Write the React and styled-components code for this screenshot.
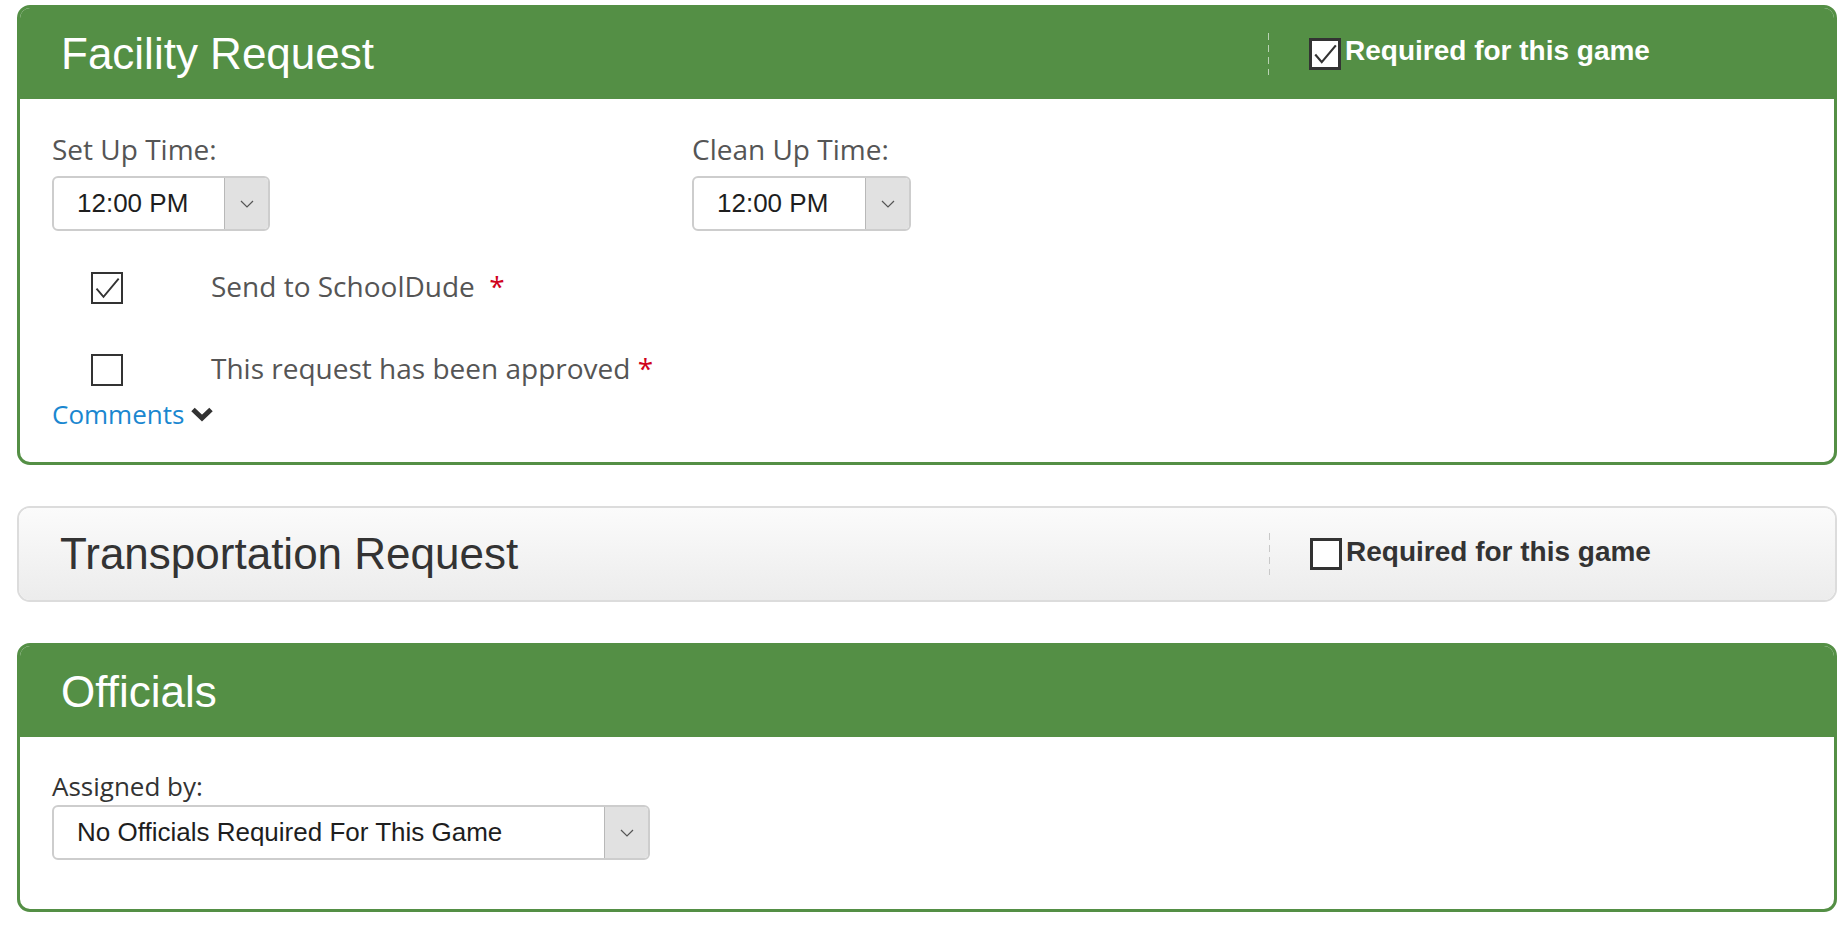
import React from "react";
import styled, { createGlobalStyle } from "styled-components";

const GREEN = "#548f45";

const GlobalStyle = createGlobalStyle`
  html, body {
    margin: 0;
    padding: 0;
    background: #fff;
  }
  body {
    font-family: "Open Sans", "Liberation Sans", sans-serif;
  }
`;

const Page = styled.div`
  padding: 5px 9px 20px 17px;
  display: flex;
  flex-direction: column;
  gap: 41px;
`;

const Card = styled.section`
  border: ${(p) => (p.$green ? `3px solid ${GREEN}` : "2px solid #dcdcdc")};
  border-radius: 13px;
  overflow: hidden;
  background: #fff;
`;

const Header = styled.header`
  height: ${(p) => (p.$green ? "91px" : "92px")};
  display: flex;
  align-items: center;
  padding-left: 41px;
  background: ${(p) =>
    p.$green ? GREEN : "linear-gradient(to bottom, #fbfbfb 0%, #ececec 100%)"};
  color: ${(p) => (p.$green ? "#fff" : "#333")};
`;

const Title = styled.h2`
  flex: 1;
  margin: 0;
  font-family: "Liberation Sans", Arial, sans-serif;
  font-weight: normal;
  font-size: 44px;
`;

const Required = styled.div`
  width: 566px;
  display: flex;
  align-items: center;
  align-self: stretch;
`;

const Divider = styled.div`
  width: 1px;
  height: 42px;
  background: repeating-linear-gradient(
    to bottom,
    ${(p) => (p.$green ? "rgba(255,255,255,0.6)" : "#c8c8c8")} 0 7px,
    transparent 7px 12px
  );
  margin-right: 40px;
`;

const RequiredLabel = styled.span`
  margin-left: 4px;
  margin-top: -5px;
  font-family: "Liberation Sans", Arial, sans-serif;
  font-weight: bold;
  font-size: 28px;
`;

const Box = styled.span`
  box-sizing: border-box;
  width: ${(p) => p.$size}px;
  height: ${(p) => p.$size}px;
  border: ${(p) => p.$bw}px solid #333;
  background: #fff;
  display: inline-flex;
  align-items: center;
  justify-content: center;
  flex-shrink: 0;
`;

const Body = styled.div`
  padding: ${(p) => p.$pad};
`;

const Columns = styled.div`
  display: grid;
  grid-template-columns: 640px 1fr;
`;

const Label = styled.div`
  font-size: ${(p) => p.$size || 28}px;
  line-height: 38px;
  color: ${(p) => p.$color || "#555"};
  margin-bottom: ${(p) => p.$gap}px;
`;

const SelectBox = styled.div`
  box-sizing: border-box;
  width: ${(p) => p.$w}px;
  height: 55px;
  display: flex;
  border: 2px solid #cdcdcd;
  border-radius: 6px;
  overflow: hidden;
  background: #fff;
`;

const SelectValue = styled.div`
  flex: 1;
  display: flex;
  align-items: center;
  padding-left: 23px;
  font-family: "Liberation Sans", Arial, sans-serif;
  font-size: 26px;
  color: #1e1e1e;
`;

const SelectButton = styled.div`
  width: 43px;
  background: #e1e1e1;
  border-left: 1px solid #b8b8b8;
  display: flex;
  align-items: center;
  justify-content: center;
`;

const CheckRows = styled.div`
  display: flex;
  flex-direction: column;
  gap: 50px;
  margin-top: 41px;
  padding-left: 39px;
`;

const CheckRow = styled.div`
  height: 32px;
  display: flex;
  align-items: center;
  gap: 88px;
`;

const CheckText = styled.span`
  font-size: 28px;
  line-height: 38px;
  color: #555;
  margin-top: -4px;
  white-space: nowrap;
`;

const Star = styled.span`
  color: #d0021b;
`;

const CommentsLink = styled.a`
  display: inline-flex;
  align-items: center;
  gap: 6px;
  margin-top: 9px;
  font-size: 26px;
  line-height: 38px;
  color: #1a87d0;
  text-decoration: none;
`;

const Check = ({ size, width }) => (
  <svg width={size} height={size} viewBox="0 0 24 24">
    <polyline
      points="3,12.5 9,19.5 22,4"
      fill="none"
      stroke="#333"
      strokeWidth={width}
    />
  </svg>
);

const Checkbox = ({ checked, size = 32, bw = 2 }) => (
  <Box $size={size} $bw={bw}>
    {checked && <Check size={size - 4} width={bw === 3 ? 2 : 1.6} />}
  </Box>
);

const Select = ({ value, width }) => (
  <SelectBox $w={width}>
    <SelectValue>{value}</SelectValue>
    <SelectButton>
      <svg width="14" height="8" viewBox="0 0 14 8">
        <polyline points="1,1 7,7 13,1" fill="none" stroke="#555" strokeWidth="1.2" />
      </svg>
    </SelectButton>
  </SelectBox>
);

const PanelHeader = ({ title, green, checked }) => (
  <Header $green={green}>
    <Title>{title}</Title>
    {checked !== undefined && (
      <Required>
        <Divider $green={green} />
        <Checkbox checked={checked} size={32} bw={3} />
        <RequiredLabel>Required for this game</RequiredLabel>
      </Required>
    )}
  </Header>
);

export default function App() {
  return (
    <Page>
      <GlobalStyle />

      <Card $green>
        <PanelHeader title="Facility Request" green checked />
        <Body $pad="31px 32px 29px 32px">
          <Columns>
            <div>
              <Label $gap={8}>Set Up Time:</Label>
              <Select value="12:00 PM" width={218} />
            </div>
            <div>
              <Label $gap={8}>Clean Up Time:</Label>
              <Select value="12:00 PM" width={219} />
            </div>
          </Columns>
          <CheckRows>
            <CheckRow>
              <Checkbox checked />
              <CheckText>
                Send to SchoolDude&nbsp; <Star>*</Star>
              </CheckText>
            </CheckRow>
            <CheckRow>
              <Checkbox />
              <CheckText>
                This request has been approved <Star>*</Star>
              </CheckText>
            </CheckRow>
          </CheckRows>
          <CommentsLink href="#">
            Comments
            <svg width="24" height="16" viewBox="0 0 24 16">
              <polyline
                points="3,3.5 12,12 21,3.5"
                fill="none"
                stroke="#333"
                strokeWidth="5"
              />
            </svg>
          </CommentsLink>
        </Body>
      </Card>

      <Card>
        <PanelHeader title="Transportation Request" checked={false} />
      </Card>

      <Card $green>
        <PanelHeader title="Officials" green />
        <Body $pad="30px 32px 49px 32px">
          <Label $gap={0} $size={26} $color="#333">
            Assigned by:
          </Label>
          <Select value="No Officials Required For This Game" width={598} />
        </Body>
      </Card>
    </Page>
  );
}
